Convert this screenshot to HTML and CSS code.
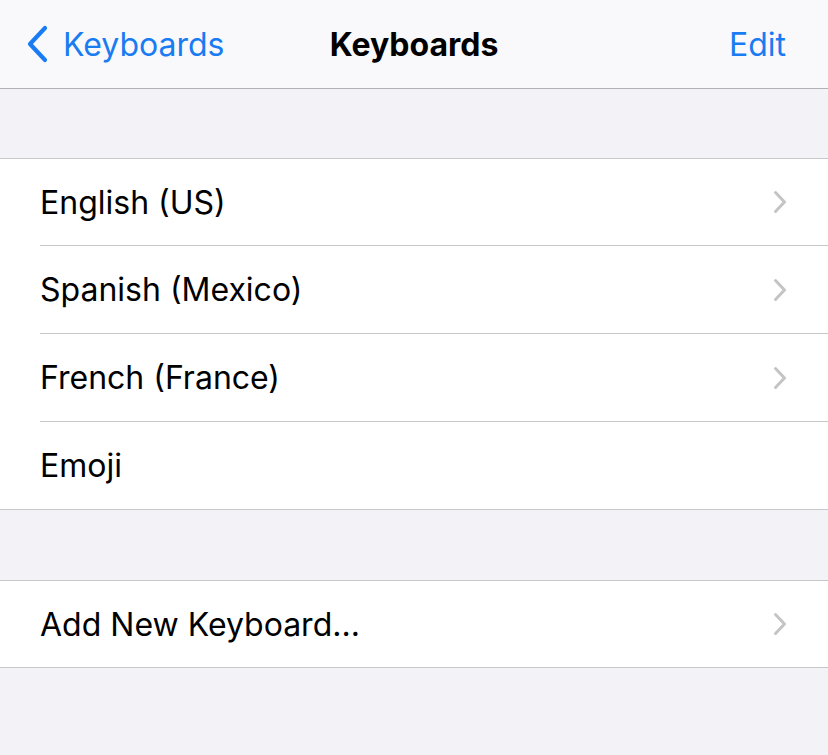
FILE: index.html
```html
<!DOCTYPE html>
<html>
<head>
<meta charset="utf-8">
<link rel="stylesheet" href="styles.css">
</head>
<body>
<header class="nav">
  <a class="nav-back">
    <svg class="back-icon" width="24" height="40" viewBox="0 0 24 40"><path d="M20 4 L5 20 L20 36" fill="none" stroke="#1a7cf2" stroke-width="4.2" stroke-linecap="round" stroke-linejoin="round"/></svg>
    <span>Keyboards</span>
  </a>
  <h1 class="nav-title">Keyboards</h1>
  <a class="nav-edit">Edit</a>
</header>
<div class="spacer"></div>
<ul class="group">
  <li class="row"><span class="label">English (US)</span><svg class="chev" width="14" height="24" viewBox="0 0 14 24"><path d="M2.5 2.5 L11.5 12 L2.5 21.5" fill="none" stroke="#c4c4c7" stroke-width="3" stroke-linecap="round" stroke-linejoin="round"/></svg></li>
  <li class="row"><span class="label">Spanish (Mexico)</span><svg class="chev" width="14" height="24" viewBox="0 0 14 24"><path d="M2.5 2.5 L11.5 12 L2.5 21.5" fill="none" stroke="#c4c4c7" stroke-width="3" stroke-linecap="round" stroke-linejoin="round"/></svg></li>
  <li class="row"><span class="label">French (France)</span><svg class="chev" width="14" height="24" viewBox="0 0 14 24"><path d="M2.5 2.5 L11.5 12 L2.5 21.5" fill="none" stroke="#c4c4c7" stroke-width="3" stroke-linecap="round" stroke-linejoin="round"/></svg></li>
  <li class="row"><span class="label">Emoji</span></li>
</ul>
<div class="spacer spacer-tall"></div>
<ul class="group">
  <li class="row"><span class="label">Add New Keyboard...</span><svg class="chev" width="14" height="24" viewBox="0 0 14 24"><path d="M2.5 2.5 L11.5 12 L2.5 21.5" fill="none" stroke="#c4c4c7" stroke-width="3" stroke-linecap="round" stroke-linejoin="round"/></svg></li>
</ul>
</body>
</html>
```
FILE: styles.css
```css
* { box-sizing: border-box; }
html, body { margin: 0; padding: 0; }
body {
  background: #f2f2f7;
  font-family: "Inter", "Liberation Sans", sans-serif;
  color: #000;
  width: 828px;
  height: 755px;
  overflow: hidden;
}
.nav {
  height: 89px;
  background: #f9f9fb;
  border-bottom: 1px solid #b2b2b4;
  display: flex;
  align-items: center;
  position: relative;
  padding: 0 42px 0 25px;
}
.nav-back {
  display: flex;
  align-items: center;
  gap: 14px;
  color: #1a7cf2;
  font-size: 32px;
}
.back-icon { display: block; }
.nav-title {
  position: absolute;
  left: 0; right: 0;
  text-align: center;
  margin: 0;
  font-size: 32px;
  font-weight: 700;
  pointer-events: none;
}
.nav-edit {
  margin-left: auto;
  color: #1a7cf2;
  font-size: 32px;
}
.spacer {
  height: 70px;
  border-bottom: 1px solid #c8c7cc;
}
.spacer-tall { height: 71px; }
.group {
  list-style: none;
  margin: 0;
  padding: 0 0 0 40px;
  background: #fff;
  border-bottom: 1px solid #c8c7cc;
}
.row {
  height: 88px;
  display: flex;
  align-items: center;
  padding-right: 41px;
  border-bottom: 1px solid #c8c7cc;
  font-size: 32px;
}
.row:first-child { height: 87px; }
.row:last-child { border-bottom: none; height: 87px; }
.row:only-child { height: 86px; }
.label { flex: 1; }
.chev { display: block; }
```
